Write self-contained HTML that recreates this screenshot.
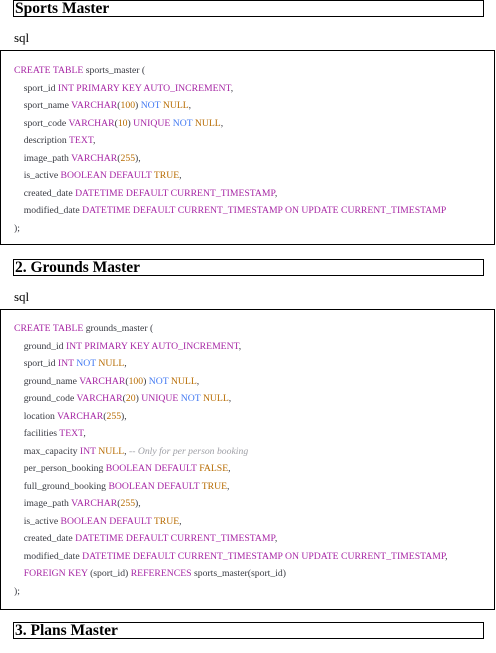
<!DOCTYPE html>
<html><head><style>
body{margin:0;width:496px;height:653px;overflow:hidden;background:#fff;font-family:"Liberation Serif",serif;color:#383a42;position:relative}
.h{position:absolute;left:13px;width:468px;height:15px;border:1px solid #000;font-weight:bold;font-size:15.5px;line-height:15px;padding-left:1px;color:#000}
.s{position:absolute;left:14px;font-size:13px;color:#000}
.c{position:absolute;left:0;border:1px solid #000;font-size:9.7px;line-height:17.5px;white-space:pre;padding-left:13px;box-sizing:border-box;width:495px}
.k{color:#a626a4}.n{color:#b76b01}.b{color:#4078f2}.m{color:#a0a1a7;font-style:italic}
</style></head><body>
<div class="h" style="top:0">Sports Master</div>
<div class="s" style="top:30px">sql</div>
<div class="c" style="top:50px;height:195px;padding-top:11px"><span class="k">CREATE TABLE</span> sports_master (
    sport_id <span class="k">INT PRIMARY KEY AUTO_INCREMENT</span>,
    sport_name <span class="k">VARCHAR</span>(<span class="n">100</span>) <span class="b">NOT</span> <span class="n">NULL</span>,
    sport_code <span class="k">VARCHAR</span>(<span class="n">10</span>) <span class="k">UNIQUE</span> <span class="b">NOT</span> <span class="n">NULL</span>,
    description <span class="k">TEXT</span>,
    image_path <span class="k">VARCHAR</span>(<span class="n">255</span>),
    is_active <span class="k">BOOLEAN DEFAULT</span> <span class="n">TRUE</span>,
    created_date <span class="k">DATETIME DEFAULT CURRENT_TIMESTAMP</span>,
    modified_date <span class="k">DATETIME DEFAULT CURRENT_TIMESTAMP ON UPDATE CURRENT_TIMESTAMP</span>
);</div>
<div class="h" style="top:259px">2. Grounds Master</div>
<div class="s" style="top:289px">sql</div>
<div class="c" style="top:309px;height:301px;padding-top:10px"><span class="k">CREATE TABLE</span> grounds_master (
    ground_id <span class="k">INT PRIMARY KEY AUTO_INCREMENT</span>,
    sport_id <span class="k">INT</span> <span class="b">NOT</span> <span class="n">NULL</span>,
    ground_name <span class="k">VARCHAR</span>(<span class="n">100</span>) <span class="b">NOT</span> <span class="n">NULL</span>,
    ground_code <span class="k">VARCHAR</span>(<span class="n">20</span>) <span class="k">UNIQUE</span> <span class="b">NOT</span> <span class="n">NULL</span>,
    location <span class="k">VARCHAR</span>(<span class="n">255</span>),
    facilities <span class="k">TEXT</span>,
    max_capacity <span class="k">INT</span> <span class="n">NULL</span>, <span class="m">-- Only for per person booking</span>
    per_person_booking <span class="k">BOOLEAN DEFAULT</span> <span class="n">FALSE</span>,
    full_ground_booking <span class="k">BOOLEAN DEFAULT</span> <span class="n">TRUE</span>,
    image_path <span class="k">VARCHAR</span>(<span class="n">255</span>),
    is_active <span class="k">BOOLEAN DEFAULT</span> <span class="n">TRUE</span>,
    created_date <span class="k">DATETIME DEFAULT CURRENT_TIMESTAMP</span>,
    modified_date <span class="k">DATETIME DEFAULT CURRENT_TIMESTAMP ON UPDATE CURRENT_TIMESTAMP</span>,
    <span class="k">FOREIGN KEY</span> (sport_id) <span class="k">REFERENCES</span> sports_master(sport_id)
);</div>
<div class="h" style="top:622px">3. Plans Master</div>
</body></html>
